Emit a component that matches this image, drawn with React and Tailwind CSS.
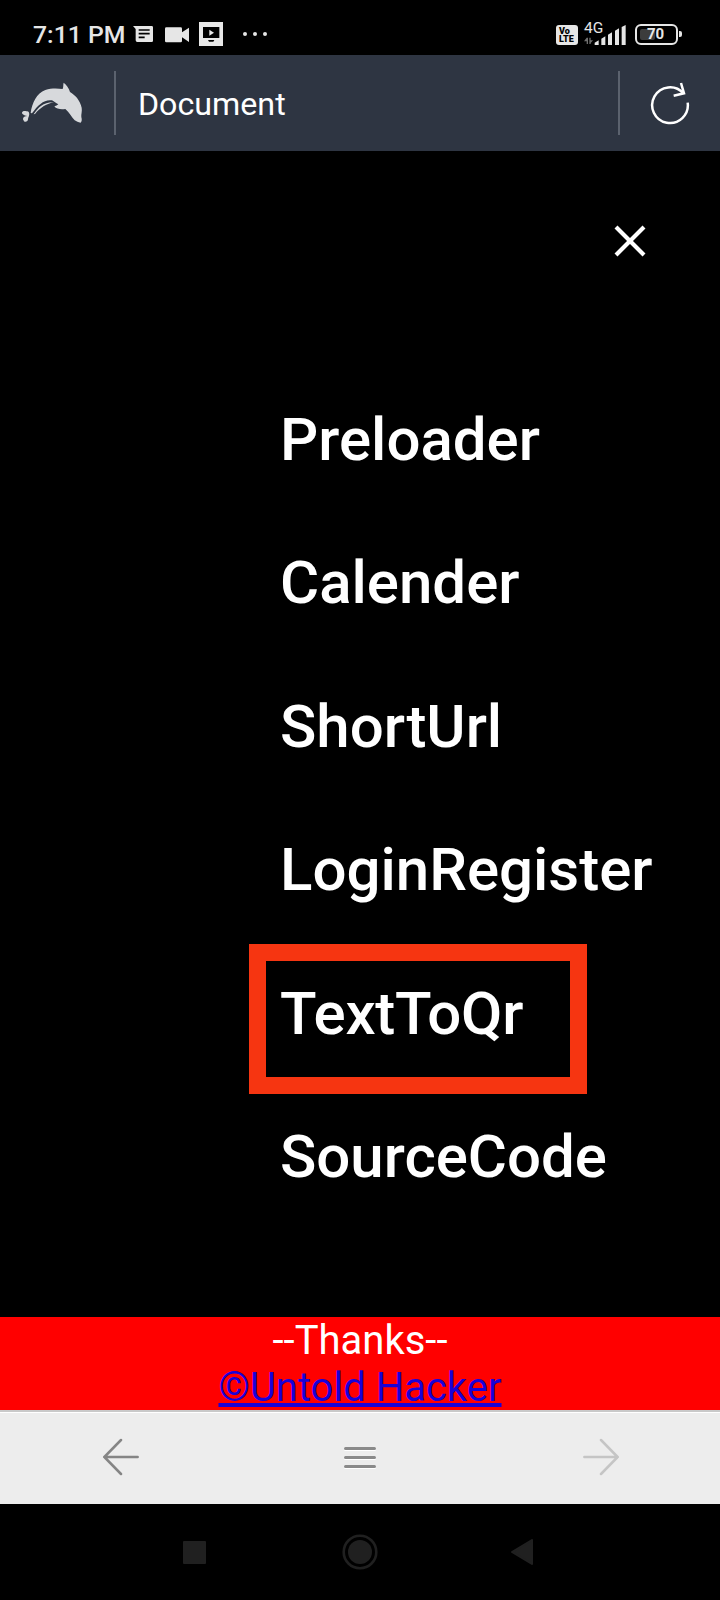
const menuItems = ["Preloader", "Calender", "ShortUrl", "LoginRegister", "TextToQr", "SourceCode"];

function MessageIcon() {
  return (
    <svg className="ml-[7px] h-[18px] w-[20px] shrink-0" viewBox="0 0 60 54">
      <path fill="#e6e6e6" d="M0 3H56Q60 3 60 7V47Q60 51 56 51H13Q8 51 8 46V12Z" />
      <path stroke="#000" strokeWidth="5" d="M17 15H50M17 26H50M17 37H35" />
    </svg>
  );
}

function VideoIcon() {
  return (
    <svg className="ml-[12px] mt-px h-[16px] w-[24px] shrink-0" viewBox="0 0 72 48">
      <path fill="#e6e6e6" d="M4 1H47Q51 1 51 5V16L72 2V45L51 31V42Q51 46 47 46H4Q0 46 0 42V5Q0 1 4 1Z" />
    </svg>
  );
}

function ScreenIcon() {
  return (
    <svg className="ml-[10px] h-[24px] w-[24px] shrink-0" viewBox="0 0 72 72">
      <path fill="#e8e8e8" d="M0 0H72V72H0Z" />
      <path fill="#000" d="M12 15H61V48H12ZM27 54H46L43 59H30Z" />
      <path fill="#e8e8e8" d="M31 23L45 32L31 41Z" />
    </svg>
  );
}

function SignalIcon() {
  return (
    <svg className="h-[20px] w-[42px]" viewBox="0 0 126 60">
      <path fill="#e6e6e6" d="M32 60V53L44 46V60ZM52 60V41L64 34V60ZM72 60V29L84 22V60ZM93 60V17L105 10V60ZM113 60V6L125 0V60Z" />
      <path fill="#6f6f6f" d="M8 38H12V57H8V49H0ZM16 57V38H20V46H27L20 54V57Z" />
    </svg>
  );
}

function StatusBar() {
  return (
    <div className="flex h-[55px] items-center bg-black pt-[13px] pl-[33px] pr-[38px] text-[#e6e6e6]">
      <span className="mt-[2px] w-[93px] whitespace-nowrap text-[24.8px] font-medium leading-[30px]">7:11 PM</span>
      <MessageIcon />
      <VideoIcon />
      <ScreenIcon />
      <svg className="ml-[20px] h-[4px] w-[24px]" viewBox="0 0 24 4" fill="#e6e6e6">
        <circle cx="2" cy="2" r="2" />
        <circle cx="12" cy="2" r="2" />
        <circle cx="22" cy="2" r="2" />
      </svg>
      <div className="ml-auto mt-[2px] flex h-[20px] w-[22px] flex-col rounded-[3px] bg-[#e6e6e6] pt-[2px] pl-[3px] text-[9px] font-black leading-[8px] text-black">
        <span>Vo</span>
        <span>LTE</span>
      </div>
      <div className="relative ml-[6px] mt-[2px] h-[20px] w-[42px]">
        <SignalIcon />
        <span className="absolute left-0 top-[-5px] text-[15.5px] leading-[17px]">4G</span>
      </div>
      <div className="ml-[9px] flex items-center">
        <div className="flex h-[21px] w-[43px] items-center rounded-[6px] border-2 border-[#e6e6e6] p-[3px]">
          <div className="flex h-[11px] w-[15px] items-center rounded-[2px] bg-[#3c3c3c] pl-[7px]">
            <span className="text-[15px] font-bold leading-none">70</span>
          </div>
        </div>
        <div className="ml-px h-[6px] w-[3px] rounded-r-[2px] bg-[#e6e6e6]" />
      </div>
    </div>
  );
}

function Dolphin() {
  return (
    <svg className="h-[42px] w-[61px]" viewBox="36 36 183 126" fill="#d7d9dc">
      <path d="M62 129C66 100 80 69 106 60C124 54 142 55 158 57C161 50 159 43 161 38C169 44 177 55 180 66C195 75 210 90 215 113C217 123 213 134 214 141C216 148 216 154 212 158C204 158 200 153 194 151C185 142 178 127 166 117C155 119 139 118 133 109C138 108 142 106 145 103C137 99 133 95 126 91C104 87 84 104 66 130Z" />
      <path d="M71 133C84 112 103 95 132 97C111 101 91 112 75 132Z" />
      <path d="M57 137C60 128 55 122 49 124C46 122 36 122 36 128C36 134 46 137 55 138C46 137 39 141 39 147C39 150 41 150 42 154C47 158 54 154 54 148C54 144 56 141 57 137Z" />
    </svg>
  );
}

function Toolbar() {
  return (
    <header className="flex h-[96px] items-center bg-[#2e3542] text-white">
      <div className="flex w-[114px] items-center pl-[22px]">
        <Dolphin />
      </div>
      <div className="h-[64px] w-[2px] bg-[#5b626e]" />
      <h1 className="flex-1 pt-[2px] pl-[22px] text-[32.2px] leading-[38px]">Document</h1>
      <div className="h-[64px] w-[2px] bg-[#5b626e]" />
      <div className="w-[100px] pl-[30px]">
        <svg className="h-[43px] w-[40px]" viewBox="360 246 120 129" fill="none" stroke="#fff" strokeWidth="7.5">
          <path d="M473 308A53.5 53.5 0 1 1 460 280" />
          <path d="M453 249L462 280L431 287" />
        </svg>
      </div>
    </header>
  );
}

function Arrow({ className }) {
  return (
    <svg className={className} viewBox="0 0 108 114" fill="none" stroke="currentColor" strokeWidth="7.5" strokeLinecap="round">
      <path d="M54 6L4 57L54 108M4 57H104" />
    </svg>
  );
}

export default function App() {
  return (
    <div className="flex h-[1600px] w-[720px] flex-col overflow-hidden bg-black font-['Roboto',sans-serif]">
      <StatusBar />
      <Toolbar />
      <main className="flex h-[1166px] flex-col bg-black text-white">
        <div className="flex h-[216.9px] justify-end pt-[74px] pr-[74px]">
          <svg className="h-[32px] w-[32px]" viewBox="0 0 32 32" fill="none" stroke="#fff" strokeWidth="4.2">
            <path d="M2 2L30 30M30 2L2 30" />
          </svg>
        </div>
        <nav className="flex flex-col pl-[280px]">
          {menuItems.map((item) => (
            <a key={item} className="relative h-[143.5px] text-[60px] font-medium leading-[143.5px]">
              {item === "TextToQr" ? <span className="tracking-[-0.25px]">{item}</span> : item}
              {item === "TextToQr" && (
                <span className="absolute left-[-31.5px] top-[2.5px] h-[150px] w-[338.5px] border-[17px] border-[#f63511]" />
              )}
            </a>
          ))}
        </nav>
      </main>
      <footer className="flex h-[93px] flex-col items-center bg-[#ff0000] text-[40px] leading-[47px] text-white">
        <span>--Thanks--</span>
        <a className="text-[#1a00d8] underline">©Untold Hacker</a>
      </footer>
      <div className="flex h-[94px] items-start border-t-2 border-[#c9c9c9] bg-[#ededed]">
        <div className="flex h-full w-full items-start justify-between border-t border-white pl-[103px] pr-[101px] pt-[24.5px]">
          <Arrow className="h-[38px] w-[36px] text-[#858585]" />
          <div className="mr-[2px] mt-[9px] flex w-[32px] flex-col gap-[6px]">
            <div className="h-[3px] rounded-full bg-[#8a8a8a] shadow-[0_1px_0_#fff]" />
            <div className="h-[3px] rounded-full bg-[#8a8a8a] shadow-[0_1px_0_#fff]" />
            <div className="h-[3px] rounded-full bg-[#8a8a8a] shadow-[0_1px_0_#fff]" />
          </div>
          <Arrow className="h-[38px] w-[36px] rotate-180 text-[#c5c5c5]" />
        </div>
      </div>
      <div className="flex h-[96px] items-center justify-between pl-[183px] pr-[187px]">
        <div className="h-[23px] w-[23px] rounded-[1px] bg-[#202020]" />
        <svg className="ml-[3px] h-[36px] w-[36px]" viewBox="0 0 36 36">
          <circle cx="18" cy="18" r="16.3" fill="none" stroke="#202020" strokeWidth="2.6" />
          <circle cx="18" cy="18" r="12" fill="#202020" />
        </svg>
        <svg className="h-[26px] w-[22px]" viewBox="0 0 22 26">
          <path fill="#202020" stroke="#202020" strokeWidth="2" strokeLinejoin="round" d="M21 1V25L1 13Z" />
        </svg>
      </div>
    </div>
  );
}
